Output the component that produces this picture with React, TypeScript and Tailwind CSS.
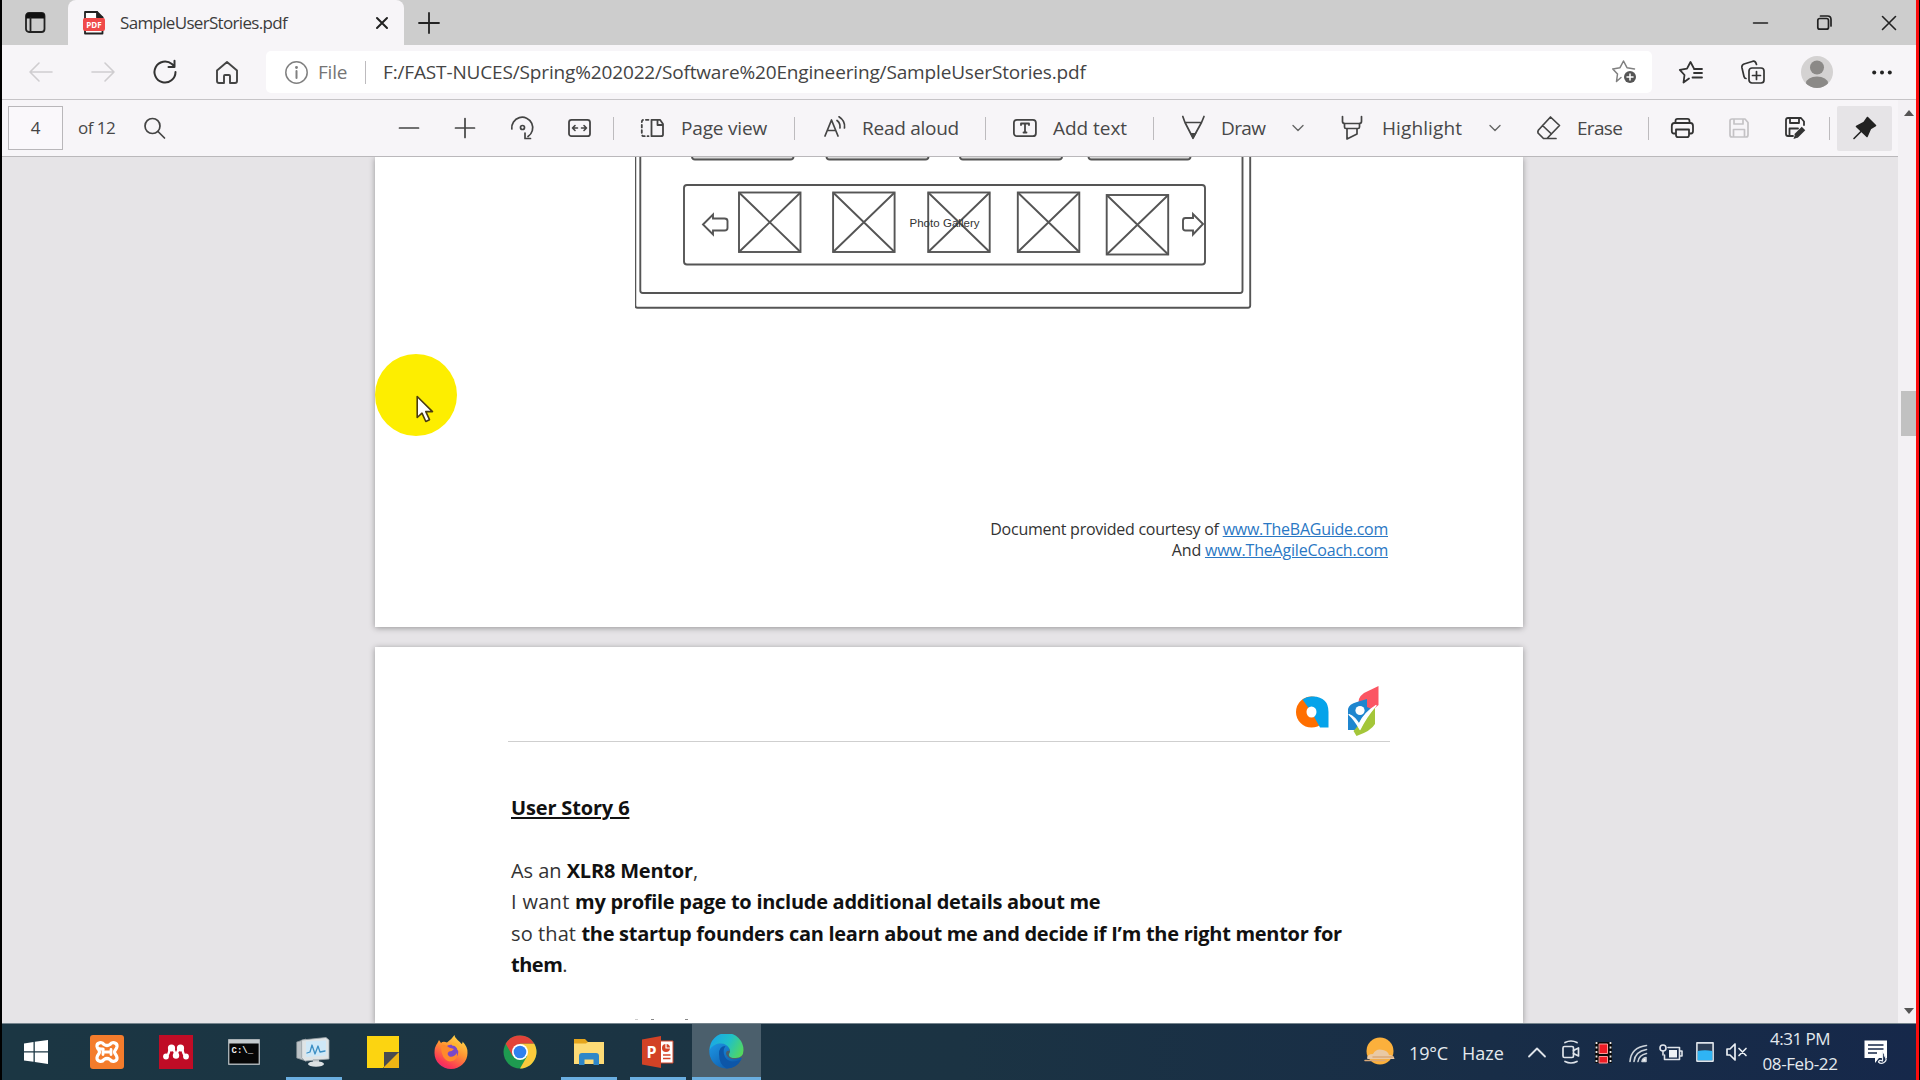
import React from "react";

type IconProps = {
  w: number;
  h: number;
  className?: string;
  sw?: number;
  color?: string;
  children: React.ReactNode;
};

function Icon({ w, h, className = "", sw = 1.6, color = "#444", children }: IconProps) {
  return (
    <svg
      width={w}
      height={h}
      viewBox={`0 0 ${w} ${h}`}
      fill="none"
      stroke={color}
      strokeWidth={sw}
      strokeLinecap="round"
      strokeLinejoin="round"
      className={`block shrink-0 overflow-visible ${className}`}
    >
      {children}
    </svg>
  );
}

function Divider({ className = "" }: { className?: string }) {
  return <div className={`h-[23px] w-px shrink-0 bg-[#bdbbbe] ${className}`} />;
}

function Label({ className = "", children }: { className?: string; children: React.ReactNode }) {
  return (
    <span className={`shrink-0 whitespace-nowrap text-[19px] leading-[26px] text-[#484848] ${className}`}>
      {children}
    </span>
  );
}

function Chevron({ className = "" }: { className?: string }) {
  return (
    <Icon w={12} h={12} className={className} sw={1.4} color="#666">
      <path d="M1 3.5 6 8.5 11 3.5" />
    </Icon>
  );
}

function TabStrip() {
  return (
    <div className="flex h-[45px] shrink-0 items-center bg-[#cdcdcd]">
      <Icon w={21} h={21} className="ml-[23px]" sw={1.8} color="#222">
        <rect x="1" y="1" width="18.5" height="19" rx="3" />
        <path d="M1 4Q1 1 4 1H16.500Q19.500 1 19.500 4V6.500H1Z" fill="#111" stroke="none" />
        <path d="M5.500 6v14" />
      </Icon>
      <div className="ml-[22px] flex h-[45px] w-[336px] shrink-0 items-center rounded-t-[8px] bg-[#f7f5f8]">
        <Icon w={22} h={24} className="ml-[15px]" sw={1.8} color="#222">
          <path d="M2 8V1H14L19.500 6.500V8M2 17v5.500H19.500V17" fill="#fff" />
          <path d="M14 1v5.500h5.500" fill="#222" />
          <rect x="0" y="7" width="22" height="13" rx="2" fill="#f04a4a" stroke="none" />
          <text x="11" y="16.500" textAnchor="middle" fill="#fff" stroke="none" fontSize="8" fontWeight="700" fontFamily="Open Sans">
            PDF
          </text>
        </Icon>
        <span className="ml-[15px] w-[250px] shrink-0 whitespace-nowrap text-[17px] tracking-[-0.68px] text-[#3c3c3c]">
          SampleUserStories.pdf
        </span>
        <Icon w={12} h={12} className="ml-[6px]" sw={2} color="#222">
          <path d="M1 1 11 11M11 1 1 11" />
        </Icon>
      </div>
      <Icon w={20} h={20} className="ml-[15px]" sw={1.8} color="#222">
        <path d="M10 0V20M0 10H20" />
      </Icon>
      <div className="ml-auto mr-[20px] flex items-center">
        <Icon w={15} h={15} sw={1.5} color="#222">
          <path d="M0.500 8H14.500" />
        </Icon>
        <Icon w={15} h={15} className="ml-[49px]" sw={1.7} color="#222">
          <rect x="0.800" y="3.500" width="10.700" height="10.700" rx="2" />
          <path d="M3.500 1h7Q14 1 14 4.500v6.500" />
        </Icon>
        <Icon w={14} h={14} className="ml-[50px]" sw={1.6} color="#222">
          <path d="M0.500 0.500 13.500 13.500M13.500 0.500 0.500 13.500" />
        </Icon>
      </div>
    </div>
  );
}

function AddressRow() {
  return (
    <div className="flex h-[54px] shrink-0 items-center bg-[#f7f5f8]">
      <Icon w={24} h={20} className="ml-[27px]" color="#cfcdd0">
        <path d="M23 10H1M10 1 1 10l9 9" />
      </Icon>
      <Icon w={24} h={20} className="ml-[38px]" color="#cfcdd0">
        <path d="M1 10H23M14 1l9 9-9 9" />
      </Icon>
      <Icon w={24} h={24} className="ml-[38px]" sw={2} color="#333">
        <path d="M22.500 12a10.500 10.500 0 1 1-3.600-7.900L21.500 6.500M21.500 0.800V7H15.500" />
      </Icon>
      <Icon w={22} h={23} className="ml-[39px]" sw={1.9} color="#444">
        <path d="M1 9.500 11 1l10 8.500V20q0 2-2 2H14V15q0-1-1-1H9q-1 0-1 1v7H3q-2 0-2-2Z" />
      </Icon>
      <div className="ml-[28px] flex h-[42px] w-[1386px] shrink-0 items-center rounded-[5px] bg-white">
        <Icon w={23} h={23} className="ml-[19px]" sw={1.5} color="#808080">
          <circle cx="11.500" cy="11.500" r="10.700" />
          <path d="M11.500 10v7" strokeWidth="2" />
          <circle cx="11.500" cy="6.500" r="0.700" fill="#808080" />
        </Icon>
        <Label className="ml-[10px] w-[30px] tracking-[-0.2px] !text-[#757575]">File</Label>
        <Divider className="ml-[17px]" />
        <Label className="ml-[17px] w-[1210px] tracking-[-0.15px] !text-[#444]">
          F:/FAST-NUCES/Spring%202022/Software%20Engineering/SampleUserStories.pdf
        </Label>
        <Icon w={26} h={24} className="ml-[19px]" sw={1.5} color="#808080">
          <path d="M9 17.500 4.500 21.500 5.500 14 0.800 8.900 8 7.700 11.500 1 15 7.700 22.500 8.900" />
          <circle cx="18" cy="17" r="6" fill="#555" stroke="none" />
          <path d="M18 14v6M15 17h6" stroke="#fff" />
        </Icon>
      </div>
      <Icon w={24} h={23} className="ml-[27px]" sw={1.8} color="#333">
        <path d="M10 17.500 4.500 21.500 5.500 14 0.800 8.900 8 7.700 11.500 1 15 7.700 17 8M15 12h8M13.500 16.500H23M15 8H23" />
      </Icon>
      <Icon w={24} h={24} className="ml-[38px]" sw={1.7} color="#333">
        <rect x="8" y="8" width="15" height="15" rx="3" />
        <path d="M15.500 11.500v8M11.500 15.500h8M5 18.500Q3.500 18.500 3 16.500L0.900 7.500Q0.500 5 3 4L12 1.200Q14.500 0.600 15.500 4.500" />
      </Icon>
      <Icon w={32} h={32} className="ml-[36px]">
        <clipPath id="avatar">
          <circle cx="16" cy="16" r="16" />
        </clipPath>
        <g clipPath="url(#avatar)" stroke="none">
          <rect width="32" height="32" fill="#d4d2d2" />
          <circle cx="16" cy="11.500" r="7" fill="#8b8987" />
          <ellipse cx="16" cy="27" rx="11" ry="6.500" fill="#8b8987" />
        </g>
      </Icon>
      <Icon w={20} h={5} className="ml-[39px]">
        <g fill="#222" stroke="none">
          <circle cx="2.200" cy="2.500" r="2" />
          <circle cx="10" cy="2.500" r="2" />
          <circle cx="17.800" cy="2.500" r="2" />
        </g>
      </Icon>
    </div>
  );
}

function PdfToolbar() {
  return (
    <div className="flex h-[56px] w-[1896px] shrink-0 items-center bg-[#f7f5f8]">
      <div className="ml-[6px] flex h-[44px] w-[55px] shrink-0 items-center justify-center border border-[#b9b7ba] bg-[#faf8fb] text-[17px] text-[#444]">
        4
      </div>
      <Label className="ml-[15px] w-[38px] !text-[17px] tracking-[-0.55px]">of 12</Label>
      <Icon w={21} h={21} className="ml-[28px]" sw={1.7}>
        <circle cx="8.500" cy="8" r="7.500" />
        <path d="M14 13.500 20.500 20" />
      </Icon>
      <Icon w={20} h={20} className="ml-[234px]" sw={1.7}>
        <path d="M0.500 10h19" />
      </Icon>
      <Icon w={20} h={20} className="ml-[36px]" sw={1.7}>
        <path d="M0.500 10h19M10 0.500v19" />
      </Icon>
      <Icon w={23} h={24} className="ml-[36px]" sw={1.7}>
        <path d="M0.800 13A10.500 10.500 0 1 1 17 20.500M14 17V22.500H19.500" />
        <circle cx="11.500" cy="11.500" r="2" />
      </Icon>
      <Icon w={23} h={18} className="ml-[34px]" sw={1.8}>
        <rect x="1" y="0.800" width="21" height="16.400" rx="2.500" />
        <path d="M4.500 9H9.500M7 6.500 4.500 9 7 11.500M18.500 9h-5M16 6.500 18.500 9 16 11.500" strokeWidth="1.600" />
      </Icon>
      <Divider className="ml-[22px]" />
      <Icon w={23} h={18} className="ml-[27px]" sw={1.8}>
        <path d="M10.500 0.800H19L22 5V15.500Q22 17.200 20 17.200H10.500ZM16.500 0.800V6H22" />
        <path d="M7.500 0.800H3Q0.800 0.800 0.800 3V15Q0.800 17.200 3 17.200H7.500" strokeDasharray="2.6 2.8" />
      </Icon>
      <Label className="ml-[17px] w-[87px] tracking-[-0.18px]">Page view</Label>
      <Divider className="ml-[26px]" />
      <Icon w={23} h={24} className="ml-[29px]" sw={1.7}>
        <path d="M1 20 7.500 4 14 20M3.300 14.500h8.500M13 4.500Q16.500 7 16 12M15 0.800Q21.500 5 20.500 12" />
      </Icon>
      <Label className="ml-[15px] w-[98px] tracking-[-0.26px]">Read aloud</Label>
      <Divider className="ml-[25px]" />
      <Icon w={24} h={18} className="ml-[27px]" sw={1.8}>
        <rect x="0.900" y="0.800" width="22" height="16.400" rx="3" />
        <path d="M8 6V4.500h8V6M12 4.500v9M10.500 13.500h3" />
      </Icon>
      <Label className="ml-[16px] w-[75px] tracking-[-0.04px]">Add text</Label>
      <Divider className="ml-[25px]" />
      <Icon w={23} h={24} className="ml-[28px]" sw={1.7}>
        <path d="M0.800 0.500 3 6.500 11 22 19.500 6.500 22 0.500M3 6.500H19.500" />
        <path d="M8 17h6.500L11 23.500Z" fill="#444" stroke="none" />
      </Icon>
      <Label className="ml-[16px] w-[45px] tracking-[-0.6px]">Draw</Label>
      <Chevron className="ml-[26px]" />
      <Icon w={20} h={24} className="ml-[38px]" sw={1.7}>
        <path d="M0.500 0.500V5.500Q0.500 7.500 3 7.500H17Q19.500 7.500 19.500 5.500V0.500M2.500 7.500V11Q2.500 12.500 4 12.500H16Q17.500 12.500 17.500 11V7.500M5 12.500V23L15 18V12.500" />
      </Icon>
      <Label className="ml-[20px] w-[81px] tracking-[0.1px]">Highlight</Label>
      <Chevron className="ml-[26px]" />
      <Icon w={24} h={24} className="ml-[36px]" sw={1.7}>
        <path d="M13.500 1 22.500 9.500 10 22.500H6.500L1 17Q0.500 15.500 1.500 14ZM5.500 9.500 14.500 18M10 22.500H19" />
      </Icon>
      <Label className="ml-[16px] w-[46px] tracking-[-0.7px]">Erase</Label>
      <Divider className="ml-[25px]" />
      <Icon w={23} h={20} className="ml-[22px]" sw={1.8} color="#333">
        <path d="M4.500 5V3Q4.500 0.800 6.500 0.800H16.500Q18.500 0.800 18.500 3V5M5 15.500H3Q0.800 15.500 0.800 13V8Q0.800 5 3.500 5H19.500Q22 5 22 8V13Q22 15.500 20 15.500H18M5 11.500H18V17Q18 19.200 16 19.200H7Q5 19.200 5 17Z" />
      </Icon>
      <Icon w={20} h={20} className="ml-[35px]" sw={1.7} color="#c4c2c5">
        <path d="M1 3Q1 1 3 1H16L19 4.500V17Q19 19 17 19H3Q1 19 1 17ZM5 1V6H14V1M4.500 19V11.500H15.500V19" />
      </Icon>
      <Icon w={22} h={22} className="ml-[36px]" sw={1.8} color="#333">
        <path d="M8 19H3Q1 19 1 17V3Q1 1 3 1H16L19 4.500V8M5 1V6H14V1M4.500 19V11.500H13" />
        <path d="M11 19 18.500 11.500" strokeWidth="5" strokeLinecap="butt" />
        <path d="M8.500 22 10 17.500 13 20.500Z" fill="#333" stroke="none" />
      </Icon>
      <Divider className="ml-[22px]" />
      <div className="ml-[7px] flex h-[45px] w-[55px] shrink-0 items-center justify-center rounded-[2px] bg-[#e6e4e7]">
        <Icon w={24} h={24} sw={1.6} color="#222">
          <path d="M14.500 1.500 22.500 9.500 17.500 12.500 14 20.500 3.500 10.500 11 6.500Z" fill="#222" />
          <path d="M8 15.500 1 22.500" />
        </Icon>
      </div>
    </div>
  );
}

function PhotoBox({ x, y }: { x: number; y: number }) {
  return (
    <g>
      <rect x={x} y={y} width="61.500" height="59.500" />
      <path d={`M${x} ${y}l61.500 59.500M${x + 61.5} ${y}l-61.500 59.500`} />
    </g>
  );
}

function Wireframe() {
  return (
    <svg width="617" height="153" viewBox="635.5 157 617 153" fill="none" stroke="#555" strokeWidth="1.9" className="block shrink-0">
      <path d="M635.800 150V305.500Q635.800 307.700 638 307.700H1248.500Q1250.700 307.700 1250.700 305.500V150" />
      <path d="M640.800 150V290.500Q640.800 293 643.300 293H1240.500Q1243 293 1243 290.500V150" />
      <g fill="#d9d9d9">
        <rect x="692.500" y="140" width="101.500" height="19.500" rx="3" />
        <rect x="827" y="140" width="102" height="19.500" rx="3" />
        <rect x="960.500" y="140" width="102" height="19.500" rx="3" />
        <rect x="1089" y="140" width="102" height="19.500" rx="3" />
      </g>
      <rect x="684.500" y="185" width="521" height="79.500" rx="3" />
      <PhotoBox x={739.5} y={192.5} />
      <PhotoBox x={833.6} y={192.5} />
      <PhotoBox x={928.7} y={192.5} />
      <PhotoBox x={1018.3} y={192.5} />
      <PhotoBox x={1107.2} y={195} />
      <path d="M703.500 224.500 713.500 214.500V218.500H725Q728 218.500 728 221V228Q728 230.500 725 230.500H713.500V234.500Z" />
      <path d="M1203.500 224 1193.500 214V218H1186Q1183.500 218 1183.500 220.500V228Q1183.500 230.500 1186 230.500H1193.500V234.500Z" />
      <text x="910" y="226.700" fill="#333" stroke="none" fontSize="11.500" fontFamily="Liberation Sans" textLength="70">
        Photo Gallery
      </text>
    </svg>
  );
}

function PageLogos() {
  return (
    <div className="flex items-end justify-end pr-[144px]">
      <Icon w={33} h={32} className="mb-[8px]">
        <g stroke="none">
          <circle cx="15.500" cy="16" r="15.500" fill="#ff6f00" />
          <path d="M6.500 3.400A15.500 15.500 0 0 1 17 0.500Q32.500 1 32.500 16V31.500H24L15.500 16Z" fill="#06a3ea" />
          <ellipse cx="15.500" cy="16" rx="5" ry="5.500" fill="#fff" />
        </g>
      </Icon>
      <Icon w={32} h={50} className="ml-[18px]">
        <g stroke="none">
          <path d="M31.500 0V19L25 24.500 12 19Q10 12 17 7Z" fill="#fb5663" />
          <path d="M20 13V21L27 24 12 44 1 44V23Q2 18 10 16Z" fill="#1f86cf" />
          <path d="M28 20V38Q24 45 9.500 50L6.500 45Z" fill="#a4c639" />
          <path d="M2 28.500Q8 31 12 38Q17 27 29 19.500Q19 31 13 43.500Q8 34 2 28.500Z" fill="#fff" stroke="#fff" strokeWidth="1.200" />
          <circle cx="13" cy="24.500" r="4.600" fill="#fff" />
        </g>
      </Icon>
    </div>
  );
}

function DocumentView() {
  return (
    <div className="flex w-[1896px] flex-col items-start overflow-hidden border-t border-[#bab8bb] bg-[#e6e4e7] pl-[373px]">
      <div className="relative flex h-[470px] w-[1148px] shrink-0 flex-col bg-white shadow-[0_1px_6px_rgba(0,0,0,0.35)]">
        <div className="pl-[260px]">
          <Wireframe />
        </div>
        <div className="mt-[209px] pr-[135px] text-right text-[16px] font-medium leading-[20.7px] text-[#333]">
          <div className="whitespace-nowrap tracking-[-0.26px]">
            Document provided courtesy of{" "}
            <span className="text-[#2a78c4] underline underline-offset-1">www.TheBAGuide.com</span>
          </div>
          <div className="whitespace-nowrap tracking-[-0.2px]">
            And <span className="text-[#2a78c4] underline underline-offset-1">www.TheAgileCoach.com</span>
          </div>
        </div>
        <div className="absolute left-0 top-[197px] h-[82px] w-[82px] rounded-full bg-[#fdee00]">
          <svg width="18" height="28" viewBox="0 0 18 28" className="absolute left-[41px] top-[41px]">
            <path d="M1.200 1.500V22.500L6 18.200 9.800 26.500 13.500 24.700 9.800 16.600H16.500Z" fill="#fff" stroke="#4a3c10" strokeWidth="1.600" strokeLinejoin="round" />
          </svg>
        </div>
      </div>
      <div className="mt-[20px] h-[376px] w-[1148px] shrink-0 overflow-hidden bg-white pt-[39px] shadow-[0_1px_6px_rgba(0,0,0,0.35)]">
        <PageLogos />
        <div className="ml-[133px] mt-[5px] h-px w-[882px] bg-[#cfcfcf]" />
        <div className="ml-[136px] mt-[50px] whitespace-nowrap text-[20px] leading-[31.4px] text-[#333]">
          <div className="font-bold tracking-[-0.16px] text-[#111] underline decoration-2 underline-offset-2">User Story 6</div>
          <div className="mt-[31.400px]">
            <span className="tracking-[-0.05px]">As an </span>
            <b className="tracking-[-0.2px] text-[#111]">XLR8 Mentor</b>,
          </div>
          <div>
            <span className="tracking-[0.3px]">I want </span>
            <b className="tracking-[-0.28px] text-[#111]">my profile page to include additional details about me</b>
          </div>
          <div>
            <span className="tracking-[0.1px]">so that </span>
            <b className="tracking-[-0.28px] text-[#111]">
              the startup founders can learn about me and decide if I’m the right mentor for
            </b>
          </div>
          <div>
            <b className="tracking-[-0.5px] text-[#111]">them</b>.
          </div>
        </div>
        <div className="mt-[39px] flex pl-[260px]">
          <div className="h-px w-[3px] bg-[#ccc]" />
          <div className="ml-[13px] h-px w-[3px] bg-[#888]" />
          <div className="ml-[31px] h-px w-[3px] bg-[#888]" />
        </div>
      </div>
    </div>
  );
}

function Scrollbar() {
  return (
    <div className="flex w-[18px] shrink-0 flex-col items-center bg-[#f3f1f4]">
      <Icon w={10} h={6} className="ml-[4px] mt-[10px]">
        <path d="M5 0 10 6H0Z" fill="#555" stroke="none" />
      </Icon>
      <div className="ml-[3px] mt-[275px] h-[45px] w-[15px] bg-[#c1c1c1]" />
      <div className="grow" />
      <Icon w={10} h={6} className="mb-[9px] ml-[4px]">
        <path d="M0 0H10L5 6Z" fill="#555" stroke="none" />
      </Icon>
    </div>
  );
}

function Task({ open = false, active = false, children }: { open?: boolean; active?: boolean; children: React.ReactNode }) {
  return (
    <div className={`flex h-full w-[68.800px] shrink-0 flex-col items-center ${active ? "bg-[#4b5f6c]" : ""}`}>
      <div className="flex h-[53px] items-center pt-[2px]">{children}</div>
      {open && <div className={`h-[3px] bg-[#6aaee0] ${active ? "w-full" : "w-[56px]"}`} />}
    </div>
  );
}

function Taskbar() {
  return (
    <div className="flex h-[57px] shrink-0 items-center border-t border-[#75848d] bg-linear-to-r from-[#1b3643] via-[#1b3343] to-[#16284a] text-[#e4e9ee]">
      <Icon w={24} h={24} className="ml-[22px] mr-[25px]">
        <path d="M0 3.500 9.500 2V11.300H0ZM10.800 1.800 24 0V11.300H10.800ZM0 12.600H9.500V21.800L0 20.500ZM10.800 12.600H24V24L10.800 22Z" fill="#fff" stroke="none" />
      </Icon>
      <Task>
        <Icon w={34} h={34}>
          <rect width="34" height="34" rx="3" fill="#f47c2c" stroke="none" />
          <path
            d="M13 14C11 14 7.500 14.500 7 11.500C6.500 7.500 12 6.500 14 9.500Q17 11.500 20 9.500C22 6.500 27.500 7.500 27 11.500C26.500 14.500 24.500 15 24.500 17C24.500 19 26.500 19.500 27 22.500C27.500 26.500 22 27.500 20 24.500Q17 22.500 14 24.500C12 27.500 6.500 26.500 7 22.500C7.500 19.500 9.500 19 9.500 17Q9.500 15 7.500 13"
            stroke="#fff"
            strokeWidth="3.200"
          />
          <path d="M13 14.500V19.500M21 14.500V19.500M13 17H21" stroke="#fff" strokeWidth="2.800" />
        </Icon>
      </Task>
      <Task>
        <Icon w={34} h={34}>
          <rect width="34" height="34" fill="#c00c26" stroke="none" />
          <g fill="#fff" stroke="none">
            <circle cx="12.500" cy="13" r="3.600" />
            <circle cx="21.500" cy="13" r="3.600" />
            <circle cx="7" cy="21.500" r="2.900" />
            <circle cx="17" cy="20.500" r="3.200" />
            <circle cx="27" cy="21.500" r="2.900" />
          </g>
          <path d="M7 21.500Q10 20 10.500 14M14.500 14.500 17 20 19.500 14.500M23.500 14Q24 20 27 21.500" stroke="#fff" strokeWidth="2.400" />
        </Icon>
      </Task>
      <Task>
        <Icon w={32} h={26} className="-ml-[2px]">
          <rect x="0.700" y="0.700" width="30.600" height="24.600" fill="#060606" stroke="#a8b0b4" strokeWidth="1.400" />
          <rect x="1" y="1" width="30" height="3.500" fill="#c4cacd" stroke="none" />
          <text x="3.500" y="13.500" fill="#eee" stroke="none" fontSize="9" fontFamily="Liberation Mono" fontWeight="700">
            C:\_
          </text>
        </Icon>
      </Task>
      <Task open>
        <Icon w={34} h={30} className="-ml-[2px]">
          <path d="M1 5 10 2V24L1 21Z" fill="#bcc3c7" stroke="#8e979c" strokeWidth="0.800" />
          <path d="M6 3 30 0.500 33 3V22L9 24 6 21Z" fill="#dfe4e6" stroke="#9aa3a8" strokeWidth="0.800" />
          <path d="M10 4.500 30 3.500V18.500L10 20Z" fill="#cfe8f7" stroke="none" />
          <path d="M11 16 14 15 16 8 19 17 22 9 24 15 29 14" stroke="#3d8fc4" strokeWidth="1.300" />
          <path d="M17 22h6v4h-6Z" fill="#b4bcc0" stroke="none" />
          <ellipse cx="20" cy="27" rx="8" ry="2.800" fill="#dce1e3" stroke="none" />
        </Icon>
      </Task>
      <Task>
        <Icon w={32} h={32}>
          <path d="M0 0H32V16L16 32H0Z" fill="#fcd411" stroke="none" />
          <path d="M17 17H32V32H17Z" fill="#eeb514" stroke="none" />
          <path d="M17 16H32L17 31Z" fill="#484b50" stroke="none" />
        </Icon>
      </Task>
      <Task>
        <svg width="34" height="34" viewBox="0 0 34 34" className="block shrink-0">
          <defs>
            <linearGradient id="fox" x1="0.800" y1="0" x2="0.250" y2="1">
              <stop offset="0" stopColor="#ffe04a" />
              <stop offset="0.450" stopColor="#ff9332" />
              <stop offset="0.850" stopColor="#fa3556" />
              <stop offset="1" stopColor="#e22a74" />
            </linearGradient>
          </defs>
          <path d="M20.500 0C21 4 26 6 27.500 9Q29 8 28.500 6.500Q34 12 33.500 18A16.500 16 0 0 1 .5 18Q.3 12 3.500 8L5 5 7 8Q9 6 13 7.500Q17 5 20.500 0Z" fill="url(#fox)" />
          <circle cx="17" cy="17" r="7.300" fill="#7b48c8" />
          <path d="M7 10Q12 9 15 12.500L20 14Q18 16.500 15 16.500Q12 19 15.500 21.500Q20 22.500 23 18Q24 26 16 26.500Q7 25 7 10Z" fill="#ff8a2c" />
          <path d="M18 9Q24 9 25 15" stroke="#ffb42e" strokeWidth="3" fill="none" />
        </svg>
      </Task>
      <Task>
        <Icon w={34} h={34}>
          <g stroke="none">
            <circle cx="17" cy="17" r="16.500" fill="#1e9a50" />
            <path d="M2.700 8.800A16.500 16.500 0 0 1 31.300 8.800H17L9.800 21.200Z" fill="#e2433a" />
            <path d="M31.300 8.800A16.500 16.500 0 0 1 17 33.500L24.200 21 17 8.800Z" fill="#fbcb3c" />
            <circle cx="17" cy="17" r="8" fill="#fff" />
            <circle cx="17" cy="17" r="6.300" fill="#2f80ee" />
          </g>
        </Icon>
      </Task>
      <Task open>
        <Icon w={30} h={26}>
          <g stroke="none">
            <path d="M0 0H11L14 3H30V25H0Z" fill="#e5a51c" />
            <path d="M0 4.500H12L14 3H30V25H0Z" fill="#fddb76" />
            <path d="M5 26V17Q5 14 8 14H22Q25 14 25 17V26H19.500V20.500H10.500V26Z" fill="#2f87c8" />
          </g>
        </Icon>
      </Task>
      <Task open>
        <Icon w={32} h={32}>
          <rect x="16" y="5" width="15" height="22" fill="#fff" stroke="#d4462a" strokeWidth="1" />
          <circle cx="24" cy="12" r="4" fill="#d4462a" stroke="none" />
          <path d="M24 12V7.500M24 12h4.500" stroke="#fff" strokeWidth="1.200" />
          <path d="M21 19h7.500M21 22.500h7.500" stroke="#d4462a" strokeLinecap="butt" />
          <path d="M0 3.500 19 0V32L0 28.500Z" fill="#d24226" stroke="none" />
          <text x="4.500" y="21.500" fill="#fff" stroke="none" fontSize="16" fontWeight="700" fontFamily="Open Sans">
            P
          </text>
        </Icon>
      </Task>
      <Task open active>
        <svg width="35" height="35" viewBox="0 0 35 35" className="block shrink-0">
          <defs>
            <linearGradient id="edgeTop" x1="0" y1="0.300" x2="1" y2="0.700">
              <stop offset="0" stopColor="#1aa5e8" />
              <stop offset="0.500" stopColor="#20c0c8" />
              <stop offset="1" stopColor="#54d85c" />
            </linearGradient>
            <linearGradient id="edgeBase" x1="0" y1="0" x2="1" y2="1">
              <stop offset="0" stopColor="#1d98e6" />
              <stop offset="1" stopColor="#0c4fa0" />
            </linearGradient>
          </defs>
          <path d="M0.500 15Q5 8 14 9Q21 11 20.500 17Q17 16 17 20Q19 26 27 25Q32 23 33 24Q28 34.500 17.500 34.500A17 17 0 0 1 .5 15Z" fill="url(#edgeBase)" />
          <path d="M0.500 16A17 17 0 0 1 34.500 16Q34.500 24 26.500 24Q19 24 20 20Q22 17 20 14Q17 9 11 9.500Q4 10 .5 16Z" fill="url(#edgeTop)" />
          <path d="M10 20Q10 12 16.500 12Q13 17 16 23Q20 30 32 26Q27 34.500 17.500 34.500Q10 31 10 20Z" fill="#0d56a8" />
        </svg>
      </Task>

      <div className="ml-auto mr-[28px] flex items-center">
        <Icon w={30} h={30}>
          <circle cx="15" cy="14" r="13.500" fill="#fbb03c" stroke="none" />
          <path d="M2 21.500Q2 17 8 17Q11 11 18 13Q23 14 24 18Q29 18 29.500 22H3Z" fill="#e9c9a4" stroke="none" />
          <path d="M0 23.500H20M8 20H28" stroke="#d9a878" strokeWidth="1.500" />
        </Icon>
        <span className="ml-[14px] mt-px w-[40px] whitespace-nowrap text-[18px] leading-[24px] tracking-[-0.16px]">19°C</span>
        <span className="ml-[13px] mt-px w-[42px] whitespace-nowrap text-[18px] leading-[24px]">Haze</span>
        <Icon w={18} h={10} className="ml-[24px]" sw={1.8} color="#dfe4ea">
          <path d="M1 9.500 9 1.500 17 9.500" />
        </Icon>
        <Icon w={18} h={24} className="ml-[16px]" sw={1.7} color="#dfe4ea">
          <rect x="1" y="6.500" width="10.500" height="11" rx="1.500" />
          <path d="M11.500 10.500 16.500 8V16L11.500 13.500M3 2.500Q9 -0.500 15 2.500M3 21.500Q9 24.500 15 21.500" />
        </Icon>
        <Icon w={17} h={21} className="ml-[15px]">
          <rect width="17" height="21" fill="#0b0b0b" stroke="none" />
          <path d="M1.500 0V21M15.500 0V21" stroke="#e8e8e8" strokeWidth="1.800" strokeDasharray="2 2.500" strokeLinecap="butt" />
          <rect x="4.500" y="2" width="8" height="9.500" fill="#ee1c25" stroke="#ff9a9a" strokeWidth="1" />
          <rect x="4.500" y="14.500" width="8" height="6.500" fill="#ee1c25" stroke="#ff9a9a" strokeWidth="1" />
        </Icon>
        <Icon w={18} h={19} className="ml-[17px] mt-[3px]" sw={1.6} color="#ccd3da">
          <path d="M1 17.500Q2 3.500 17.500 1.500M5 17.500Q6 7.500 17.500 5.500M9 17.500Q10 11 17.500 9.500" />
          <path d="M13 17.500Q13.500 14 17 13.500V17.500Z" fill="#fff" />
        </Icon>
        <Icon w={24} h={17} className="ml-[12px]" sw={1.6} color="#dfe4ea">
          <path d="M9 3.500H20.500V15.500H5.500V11M20.500 7H23V12H20.500" />
          <rect x="10" y="6" width="8" height="7.500" fill="#eef2f5" stroke="none" />
          <circle cx="4" cy="4" r="3" fill="#16284a" />
          <path d="M4 7v4" />
        </Icon>
        <Icon w={18} h={20} className="ml-[13px]">
          <rect x="0.900" y="0.900" width="16.200" height="18.200" fill="#2c3d55" stroke="#dfe4ea" strokeWidth="1.600" />
          <path d="M1.700 9Q9 7.500 16.300 9V18.300H1.700Z" fill="#2fb4f4" stroke="none" />
        </Icon>
        <Icon w={21} h={20} className="ml-[12px]" sw={1.7} color="#e8edf2">
          <path d="M1 7H4L9 2V18L4 13H1ZM13 6.500 20 13.500M20 6.500 13 13.500" />
        </Icon>
        <div className="-mt-[2px] ml-[13px] flex w-[80px] flex-col items-center whitespace-nowrap text-[17px] leading-[25px]">
          <span className="tracking-[-0.5px]">4:31 PM</span>
          <span className="tracking-[-0.4px]">08-Feb-22</span>
        </div>
        <Icon w={24} h={24} className="ml-[24px]">
          <path d="M0.500 0.500H23V18H15L11 23V18H0.500Z" fill="#fff" stroke="none" />
          <path d="M4 5h15.500M4 9h15.500M4 13h9" stroke="#17294a" strokeLinecap="butt" />
          <path d="M18.500 12V21Q15 19.500 14.500 22Q17 24.500 20 22.500Q24 20 20.500 15.500" fill="#17294a" stroke="#e8edf2" strokeWidth="1.300" />
        </Icon>
      </div>
    </div>
  );
}

export default function App() {
  return (
    <div className="flex h-[1080px] w-[1920px] overflow-hidden bg-black pl-[2px] font-['Open_Sans','Noto_Sans',sans-serif]">
      <div className="flex h-full w-[1914px] shrink-0 flex-col bg-[#f7f5f8]">
        <TabStrip />
        <AddressRow />
        <div className="flex h-[924px] shrink-0 border-t border-[#c6c4c7]">
          <div className="flex w-[1896px] shrink-0 flex-col">
            <PdfToolbar />
            <DocumentView />
          </div>
          <Scrollbar />
        </div>
        <Taskbar />
      </div>
      <div className="h-full w-[3px] bg-[#fb0d0d]" />
    </div>
  );
}
